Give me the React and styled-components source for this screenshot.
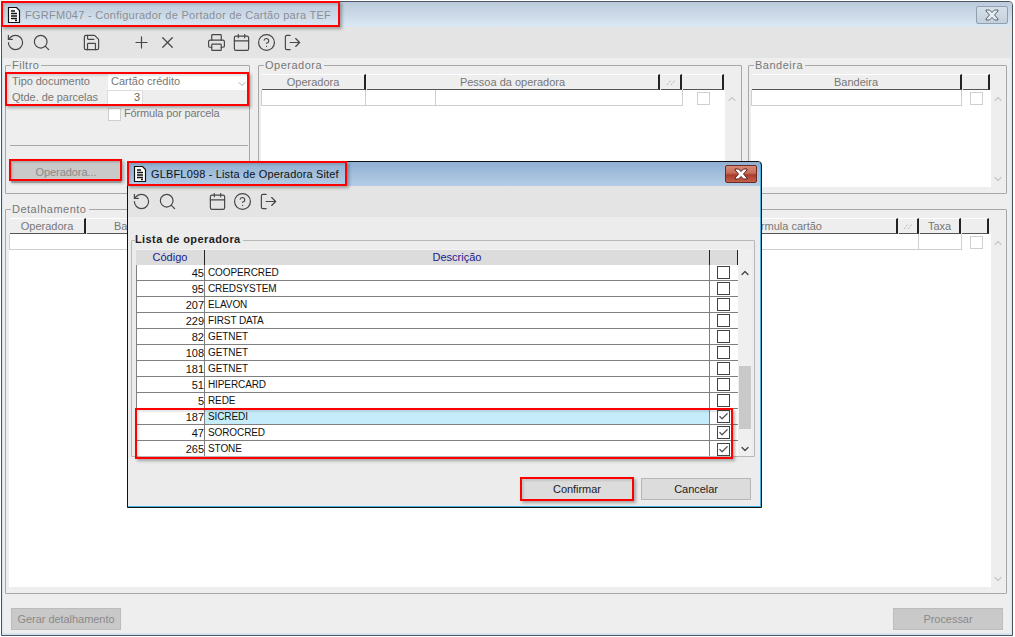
import React from "react";
import styled, { createGlobalStyle } from "styled-components";
import { RotateCcw, Search, Save, Plus, X, Printer, Calendar, CircleHelp, LogOut, ChevronUp, ChevronDown, Check } from "lucide-react";

const Global = createGlobalStyle`
  html, body { margin: 0; padding: 0; background: #fff; }
  body { width: 1015px; height: 637px; overflow: hidden; font-family: "Liberation Sans", Arial, sans-serif; font-size: 11px; }
  * { box-sizing: border-box; }
`;

const Page = styled.div`
  position: relative;
  width: 1015px;
  height: 637px;
  padding: 1px 2px 2px 1px;
`;
const Win = styled.div`
  width: 1012px;
  height: 635px;
  border: 1px solid #4a5560;
  border-radius: 4px 4px 0 0;
  background: #eee;
  box-shadow: inset 1px -2px 0 #d6e4f0, inset -1px 0 0 #d6e4f0;
  display: flex;
  flex-direction: column;
  overflow: hidden;
`;
const TitleBar = styled.div`
  height: ${p => p.$active ? 24 : 25}px;
  flex: none;
  display: flex;
  align-items: center;
  padding: 0 ${p => p.$active ? 3 : 4}px 0 4px;
  gap: 3px;
  background: ${p => p.$active ? "linear-gradient(#8fb0d2, #b4cde6)" : "linear-gradient(#bccbdb, #dbe8f4)"};
`;
const TitleText = styled.div`
  flex: 1;
  font-size: 11px;
  letter-spacing: ${p => p.$active ? "0.16px" : "0.27px"};
  color: ${p => p.$active ? "#111" : "#8b8f95"};
  white-space: nowrap;
`;
const CloseBtn = styled.div`
  width: 32px;
  height: 18px;
  border: 1px solid ${p => p.$active ? "#6d2a22" : "#8fa0b0"};
  border-radius: 2px;
  display: flex;
  align-items: center;
  justify-content: center;
  background: ${p => p.$active ? "linear-gradient(#d98a78 0%, #c76a58 45%, #ab3b2a 55%, #c2604e 100%)" : "linear-gradient(#d4dfe9, #c4d0dc)"};
`;
const Toolbar = styled.div`
  height: 31px;
  flex: none;
  background: #e4e4e4;
  display: flex;
  align-items: center;
  padding-left: 5px;
`;
const ToolIcon = styled.span`
  display: flex;
  justify-content: center;
  width: 16px;
  margin-right: ${p => p.$gap}px;
  color: #474747;
  svg { flex: none; }
`;
const Main = styled.div`
  flex: 1;
  display: flex;
  flex-direction: column;
  padding: 0 5px 0 3px;
  min-height: 0;
`;
const TopRow = styled.div`
  display: flex;
  gap: 6px;
  height: 136px;
  flex: none;
`;
const Group = styled.fieldset`
  margin: 0 ${p => p.$mr || 0}px 0 0;
  padding: 0 ${p => p.$pr ?? 0}px 0 ${p => p.$pl ?? 3}px;
  border: 0;
  min-width: 0;
  position: relative;
  display: flex;
  flex-direction: column;
  width: ${p => p.$w ? p.$w + "px" : "auto"};
  flex: ${p => p.$w ? "none" : "1"};
  &::before {
    content: "";
    position: absolute;
    inset: 7px 0 0 0;
    border: 1px solid #a8a8a8;
    border-radius: 1px;
    pointer-events: none;
  }
`;
const DetailGroup = styled(Group)`
  margin-top: 8px;
`;
const Legend = styled.div`
  position: relative;
  z-index: 1;
  align-self: flex-start;
  height: 14px;
  line-height: 14px;
  margin-left: ${p => p.$ml ?? 3}px;
  padding: 0 2px 0 1px;
  background: #eee;
  font-size: 11px;
  font-weight: ${p => p.$strong ? 700 : 400};
  letter-spacing: ${p => p.$strong ? "0.4px" : "0.5px"};
  color: ${p => p.$strong ? "#222" : "#777"};
`;
const GroupSpacer = styled.div`height: 2px; flex: none;`;
const Field = styled.div`
  display: flex;
  align-items: center;
  height: 16px;
  flex: none;
  padding-left: 4px;
`;
const Label = styled.div`
  width: 96px;
  flex: none;
  color: #777;
  letter-spacing: -0.05px;
  padding-bottom: 2px;
`;
const Select = styled.div`
  width: 140px;
  height: 16px;
  background: #fff;
  color: #777;
  padding-left: 3px;
  line-height: 14px;
  display: flex;
  justify-content: space-between;
  align-items: flex-start;
  svg { margin-top: 4px; }
`;
const NumInput = styled.div`
  width: 36px;
  height: 16px;
  margin-left: -1px;
  background: #fff;
  border: 1px solid #dcdcdc;
  text-align: right;
  padding-right: 2px;
  color: #666;
  line-height: 13px;
`;
const CheckRow = styled.div`
  display: flex;
  align-items: center;
  height: 16px;
  flex: none;
  margin-left: 100px;
  gap: 3px;
  color: #777;
  letter-spacing: -0.15px;
`;
const CheckText = styled.span`
  margin-top: -2px;
`;
const BlankBox = styled.span`
  display: flex;
  align-items: center;
  justify-content: center;
  width: 13px;
  height: 13px;
  flex: none;
  background: #fff;
  border: 1px solid ${p => p.$dark ? "#444" : "#cfcfcf"};
  color: #555;
`;
const Divider = styled.div`
  height: 1px;
  flex: none;
  background: #a8a8a8;
  margin: 23px 0 0 2px;
`;
const ActionBtn = styled.div`
  width: ${p => p.$w || 110}px;
  height: ${p => p.$h || 22}px;
  flex: none;
  background: ${p => p.$bg || "#c9c9c9"};
  border: 1px solid ${p => p.$bd || "#bcbcbc"};
  color: ${p => p.$fg || "#8a8a8a"};
  display: flex;
  align-items: center;
  justify-content: center;
  letter-spacing: -0.05px;
`;
const BtnRow = styled.div`
  display: flex;
  gap: 16px;
  margin: 15px 0 0 3px;
`;
const Sheet = styled.div`
  display: flex;
  flex: 1;
  min-height: 0;
  margin: 2px 0 7px 0;
`;
const SheetMain = styled.div`
  flex: 1;
  min-width: 0;
  display: flex;
  flex-direction: column;
`;
const HeadRow = styled.div`
  display: flex;
  height: 16px;
  flex: none;
  background: #eee;
  padding-left: 1px;
`;
const HeadCell = styled.div`
  width: ${p => p.$w}px;
  flex: ${p => p.$w ? "none" : "1"};
  border-top: 1px solid #fff;
  border-bottom: 1px solid #555;
  border-right: 2px solid #222;
  color: #777;
  text-align: ${p => p.$pl ? "left" : "center"};
  padding-left: ${p => p.$pl || 0}px;
  line-height: 14px;
  overflow: hidden;
  white-space: nowrap;
  margin-right: 1px;
  display: ${p => p.$icon ? "flex" : "block"};
  align-items: center;
  justify-content: center;
`;
const HeadGap = styled.div`
  width: ${p => p.$w}px;
  flex: none;
`;
const WhiteArea = styled.div`
  flex: 1;
  min-height: 0;
  background: #fff;
`;
const EmptyRow = styled.div`
  display: flex;
  height: 16px;
`;
const EmptyCell = styled.div`
  width: ${p => p.$w}px;
  flex: ${p => p.$w ? "none" : "1"};
  border-right: 1px solid #cfcfcf;
  border-bottom: 1px solid #cfcfcf;
  &:first-child { border-left: 1px solid #cfcfcf; }
`;
const CheckCell = styled.div`
  display: flex;
  justify-content: center;
  align-items: center;
  width: ${p => p.$w}px;
  height: 16px;
  padding: 1px 1px 0 0;
`;
const Scroll = styled.div`
  width: 14px;
  flex: none;
  background: ${p => p.$dark ? "#efefef" : "#eee"};
  display: flex;
  flex-direction: column;
  justify-content: space-between;
  align-items: center;
  padding: ${p => p.$offset || 19}px 0 2px;
  color: ${p => p.$dark ? "#444" : "#c8c8c8"};
  svg { flex: none; }
`;
const Footer = styled.div`
  display: flex;
  justify-content: space-between;
  padding: 14px 4px 0 6px;
  height: 41px;
  flex: none;
`;
const DialogWin = styled.div`
  position: absolute;
  left: 127px;
  top: 161px;
  width: 635px;
  height: 347px;
  border: 1px solid #111;
  border-radius: 4px 4px 0 0;
  padding: 0 1px 1px 0;
  background: #45b4e0;
  display: flex;
  flex-direction: column;
  overflow: hidden;
`;
const DialogBody = styled.div`
  flex: 1;
  background: #ececec;
  padding: 16px 5px 0 3px;
  display: flex;
  flex-direction: column;
`;
const DialogGroup = styled(Group)`
  flex: none;
  height: 231px;
  padding: 0 3px 0 5px;
  &::before { border-color: #b8b8b8; }
`;
const DLegend = styled(Legend)`
  background: #ececec;
  margin-left: -1px;
  padding: 0 2px 0 0;
  height: 13px;
  line-height: 13px;
`;
const DSheet = styled.div`
  display: flex;
  height: 208px;
  margin-top: 3px;
`;
const DHead = styled.div`
  display: flex;
  height: 16px;
  background: #dcdcdc;
  border-top: 1px solid #f4f4f4;
`;
const DHeadCell = styled.div`
  width: ${p => p.$w}px;
  flex: ${p => p.$w ? "none" : "1"};
  text-align: center;
  color: #1a1a8c;
  line-height: 15px;
  border-right: 1px solid #222;
`;
const DRow = styled.div`
  display: flex;
  height: 16px;
  background: #fff;
  border-bottom: 1px solid #808080;
  &:last-child { border-bottom: 0; }
`;
const CodeCell = styled.div`
  width: 69px;
  flex: none;
  text-align: right;
  line-height: 16px;
  color: #111;
  border-right: 1px solid #808080;
  border-left: 1px solid #808080;
`;
const NameCell = styled.div`
  flex: 1;
  padding-left: 3px;
  font-size: 10px;
  letter-spacing: -0.1px;
  line-height: 16px;
  color: #111;
  background: ${p => p.$sel ? "#c5ecfa" : "#fff"};
  border-right: 1px solid #808080;
`;
const BoxCell = styled.div`
  width: 28px;
  flex: none;
  display: flex;
  align-items: center;
  justify-content: center;
  padding-right: 1px;
`;
const RowsWrap = styled.div`
  display: flex;
  flex-direction: column;
`;
const DThumb = styled.div`
  width: 12px;
  height: 63px;
  margin-top: auto;
  margin-bottom: 14px;
  background: #c9c9c9;
`;
const DialogFooter = styled.div`
  display: flex;
  justify-content: flex-end;
  gap: 8px;
  padding: 14px 4px 0 0;
`;
const Mark = styled.div`
  position: absolute;
  left: ${p => p.$x}px;
  top: ${p => p.$y}px;
  width: ${p => p.$w}px;
  height: ${p => p.$h}px;
  border: 2px solid #f00;
  box-shadow: 2px 2px 3px rgba(0,0,0,0.3), inset 2px 2px 2px rgba(0,0,0,0.1);
  pointer-events: none;
`;

const DocIcon = () => (
  <svg width="16" height="18" viewBox="0 0 16 18" style={{ flex: "none" }}>
    <path d="M2.500 1.500h8l3 3v12h-11z" fill="#fff" stroke="#111" strokeWidth="1.2" />
    <path d="M5 5h4M5 7.500h6M5 10h6M5 12.500h6M9 14.500h2" stroke="#111" strokeWidth="1.300" />
  </svg>
);
const FatX = ({ active }) => (
  <svg width="16" height="12" viewBox="0 0 16 12">
    <path d="M2 1h3.500L8 3.500 10.500 1H14v1l-3.500 4 3.500 4v1h-3.500L8 8.500 5.500 11H2v-1l3.500-4L2 2z"
      fill={active ? "#fff" : "#e6edf3"} stroke={active ? "#5a1f18" : "#55606a"} strokeWidth="1" />
  </svg>
);
const DotSlash = () => (
  <svg width="10" height="8" viewBox="0 0 10 8">
    <path d="M1 7 5 2M5 7 9 2" stroke="#aaa" strokeWidth="1" strokeDasharray="1 1" fill="none" />
  </svg>
);
const Tool = ({ icon: I, gap }) => (
  <ToolIcon $gap={gap}><I size={19} strokeWidth={1.5} /></ToolIcon>
);
const ScrollArrows = () => (
  <Scroll>
    <ChevronUp size={12} strokeWidth={2.4} />
    <ChevronDown size={12} strokeWidth={2.4} />
  </Scroll>
);

const rows = [
  [45, "COOPERCRED"], [95, "CREDSYSTEM"], [207, "ELAVON"], [229, "FIRST DATA"],
  [82, "GETNET"], [108, "GETNET"], [181, "GETNET"], [51, "HIPERCARD"], [5, "REDE"],
  [187, "SICREDI", 1, 1], [47, "SOROCRED", 0, 1], [265, "STONE", 0, 1],
];

export default function App() {
  return (
    <Page>
      <Global />
      <Win>
        <TitleBar>
          <DocIcon />
          <TitleText>FGRFM047 - Configurador de Portador de Cartão para TEF</TitleText>
          <CloseBtn><FatX /></CloseBtn>
        </TitleBar>
        <Toolbar>
          <Tool icon={RotateCcw} gap={10} />
          <Tool icon={Search} gap={34} />
          <Tool icon={Save} gap={34} />
          <Tool icon={Plus} gap={10} />
          <Tool icon={X} gap={33} />
          <Tool icon={Printer} gap={9} />
          <Tool icon={Calendar} gap={9} />
          <Tool icon={CircleHelp} gap={10} />
          <Tool icon={LogOut} gap={0} />
        </Toolbar>
        <Main>
          <TopRow>
            <Group $w={245} $mr={2} $pr={2}>
              <Legend>Filtro</Legend>
              <GroupSpacer />
              <Field>
                <Label>Tipo documento</Label>
                <Select>Cartão crédito<ChevronDown size={12} color="#aaa" /></Select>
              </Field>
              <Field>
                <Label>Qtde. de parcelas</Label>
                <NumInput>3</NumInput>
              </Field>
              <CheckRow><BlankBox /><CheckText>Fórmula por parcela</CheckText></CheckRow>
              <Divider />
              <BtnRow>
                <ActionBtn>Operadora...</ActionBtn>
                <ActionBtn $w={111} />
              </BtnRow>
            </Group>
            <Group $w={484} $pr={3}>
              <Legend>Operadora</Legend>
              <Sheet>
                <SheetMain>
                  <HeadRow>
                    <HeadCell $w={104}>Operadora</HeadCell>
                    <HeadCell $w={293}>Pessoa da operadora</HeadCell>
                    <HeadCell $w={21} $icon><DotSlash /></HeadCell>
                    <HeadCell $w={41} />
                    <HeadGap $w={2} />
                  </HeadRow>
                  <WhiteArea>
                    <EmptyRow>
                      <EmptyCell $w={105} />
                      <EmptyCell $w={70} />
                      <EmptyCell $w={247} />
                      <CheckCell $w={42}><BlankBox /></CheckCell>
                    </EmptyRow>
                  </WhiteArea>
                </SheetMain>
                <ScrollArrows />
              </Sheet>
            </Group>
            <Group $w={259} $pr={2}>
              <Legend>Bandeira</Legend>
              <Sheet>
                <SheetMain>
                  <HeadRow>
                    <HeadCell $w={210}>Bandeira</HeadCell>
                    <HeadCell $w={27} />
                  </HeadRow>
                  <WhiteArea>
                    <EmptyRow>
                      <EmptyCell $w={211} />
                      <CheckCell $w={29}><BlankBox /></CheckCell>
                    </EmptyRow>
                  </WhiteArea>
                </SheetMain>
                <ScrollArrows />
              </Sheet>
            </Group>
          </TopRow>
          <DetailGroup $pr={2} $pl={4}>
            <Legend $ml={2}>Detalhamento</Legend>
            <Sheet>
              <SheetMain>
                <HeadRow>
                  <HeadCell $w={76}>Operadora</HeadCell>
                  <HeadCell $w={300} $pl={27}>Bandeira</HeadCell>
                  <HeadCell $pl={360}>Fórmula cartão</HeadCell>
                  <HeadCell $w={20} $icon><DotSlash /></HeadCell>
                  <HeadCell $w={41}>Taxa</HeadCell>
                  <HeadCell $w={27} />
                  <HeadGap $w={1} />
                </HeadRow>
                <WhiteArea>
                  <EmptyRow>
                    <EmptyCell />
                    <EmptyCell $w={43} />
                    <CheckCell $w={29}><BlankBox /></CheckCell>
                  </EmptyRow>
                </WhiteArea>
              </SheetMain>
              <ScrollArrows />
            </Sheet>
          </DetailGroup>
          <Footer>
            <ActionBtn>Gerar detalhamento</ActionBtn>
            <ActionBtn>Processar</ActionBtn>
          </Footer>
        </Main>
      </Win>

      <DialogWin>
        <TitleBar $active>
          <DocIcon />
          <TitleText $active>GLBFL098 - Lista de Operadora Sitef</TitleText>
          <CloseBtn $active><FatX active /></CloseBtn>
        </TitleBar>
        <Toolbar>
          <Tool icon={RotateCcw} gap={10} />
          <Tool icon={Search} gap={34} />
          <Tool icon={Calendar} gap={9} />
          <Tool icon={CircleHelp} gap={10} />
          <Tool icon={LogOut} gap={0} />
        </Toolbar>
        <DialogBody>
          <DialogGroup>
            <DLegend $strong>Lista de operadora</DLegend>
            <DSheet>
              <SheetMain>
                <DHead>
                  <DHeadCell $w={69}>Código</DHeadCell>
                  <DHeadCell>Descrição</DHeadCell>
                  <DHeadCell $w={28} />
                </DHead>
                <RowsWrap>
                  {rows.map(([code, name, sel, on]) => (
                    <DRow key={code}>
                      <CodeCell>{code}</CodeCell>
                      <NameCell $sel={sel}>{name}</NameCell>
                      <BoxCell><BlankBox $dark>{on ? <Check size={11} strokeWidth={2.6} /> : null}</BlankBox></BoxCell>
                    </DRow>
                  ))}
                </RowsWrap>
              </SheetMain>
              <Scroll $dark $offset={18}>
                <ChevronUp size={12} strokeWidth={2.6} />
                <DThumb />
                <ChevronDown size={12} strokeWidth={2.6} />
              </Scroll>
            </DSheet>
          </DialogGroup>
          <DialogFooter>
            <ActionBtn $w={112} $bg="#dcdcdc" $bd="#b5b5b5" $fg="#222">Confirmar</ActionBtn>
            <ActionBtn $bg="#dcdcdc" $bd="#b5b5b5" $fg="#222">Cancelar</ActionBtn>
          </DialogFooter>
        </DialogBody>
      </DialogWin>

      <Mark $x={1} $y={1} $w={339} $h={26} />
      <Mark $x={5} $y={72} $w={244} $h={34} />
      <Mark $x={9} $y={159} $w={113} $h={22} />
      <Mark $x={127} $y={161} $w={220} $h={25} />
      <Mark $x={135} $y={408} $w={598} $h={51} />
      <Mark $x={520} $y={477} $w={114} $h={24} />
    </Page>
  );
}
